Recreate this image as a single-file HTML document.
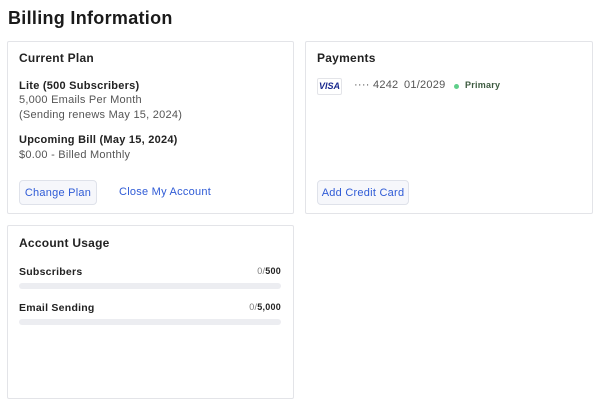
<!DOCTYPE html>
<html><head><style>
*{margin:0;padding:0;box-sizing:border-box}
body{width:600px;height:413px;background:#fff;font-family:"Liberation Sans",sans-serif;color:#1f1f1f;position:relative;overflow:hidden;letter-spacing:0.25px}
.a{position:absolute;white-space:nowrap}
.card{position:absolute;border:1px solid #e3e4e8;border-radius:2px;background:#fff}
.h{font-size:12px;font-weight:bold;color:#222}
.t{font-size:11px;color:#555}
.b{font-size:11px;font-weight:bold;color:#222}
.btn{position:absolute;border:1px solid #dfe2ea;background:#f6f7fb;border-radius:4px;color:#2f5bd6;font-size:11px;display:flex;align-items:center;justify-content:center}
.bar{position:absolute;left:19px;width:262px;height:6px;border-radius:3px;background:#ecedf1}
</style></head><body>
<div class="a" style="left:8px;top:8px;font-size:18px;font-weight:bold;color:#1a1a1a;letter-spacing:0.3px">Billing Information</div>

<div class="card" style="left:7px;top:41px;width:287px;height:173px"></div>
<div class="a h" style="left:19px;top:51px">Current Plan</div>
<div class="a b" style="left:19px;top:80px">Lite (500 Subscribers)</div>
<div class="a t" style="left:19px;top:94px">5,000 Emails Per Month</div>
<div class="a t" style="left:19px;top:109px">(Sending renews May 15, 2024)</div>
<div class="a b" style="left:19px;top:134px">Upcoming Bill (May 15, 2024)</div>
<div class="a t" style="left:19px;top:149px">$0.00 - Billed Monthly</div>
<div class="btn" style="left:19px;top:180px;width:78px;height:25px">Change Plan</div>
<div class="a" style="left:119px;top:186px;font-size:11px;color:#2f5bd6">Close My Account</div>

<div class="card" style="left:305px;top:41px;width:288px;height:173px"></div>
<div class="a h" style="left:317px;top:51px">Payments</div>
<div class="a" style="left:317px;top:78px;width:25px;height:17px;border:1px solid #e3e4e8;border-radius:2px;font-size:9px;font-weight:bold;font-style:italic;color:#1a2a8f;text-align:center;line-height:15px;letter-spacing:0">VISA</div>
<div class="a t" style="left:354px;top:79px">···· 4242</div>
<div class="a t" style="left:404px;top:79px">01/2029</div>
<div class="a" style="left:454px;top:84px;width:5px;height:5px;border-radius:50%;background:#5fcf8a"></div>
<div class="a" style="left:465px;top:80px;font-size:9px;font-weight:bold;color:#3c5a3f">Primary</div>
<div class="btn" style="left:317px;top:180px;width:92px;height:25px">Add Credit Card</div>

<div class="card" style="left:7px;top:225px;width:287px;height:174px"></div>
<div class="a h" style="left:19px;top:236px">Account Usage</div>
<div class="a" style="left:19px;top:266px;font-size:10.5px;font-weight:bold;color:#222">Subscribers</div>
<div class="a" style="right:319px;top:266px;font-size:9px;color:#777">0/<b style="color:#222">500</b></div>
<div class="bar" style="top:283px"></div>
<div class="a" style="left:19px;top:302px;font-size:10.5px;font-weight:bold;color:#222">Email Sending</div>
<div class="a" style="right:319px;top:302px;font-size:9px;color:#777">0/<b style="color:#222">5,000</b></div>
<div class="bar" style="top:319px"></div>
</body></html>
